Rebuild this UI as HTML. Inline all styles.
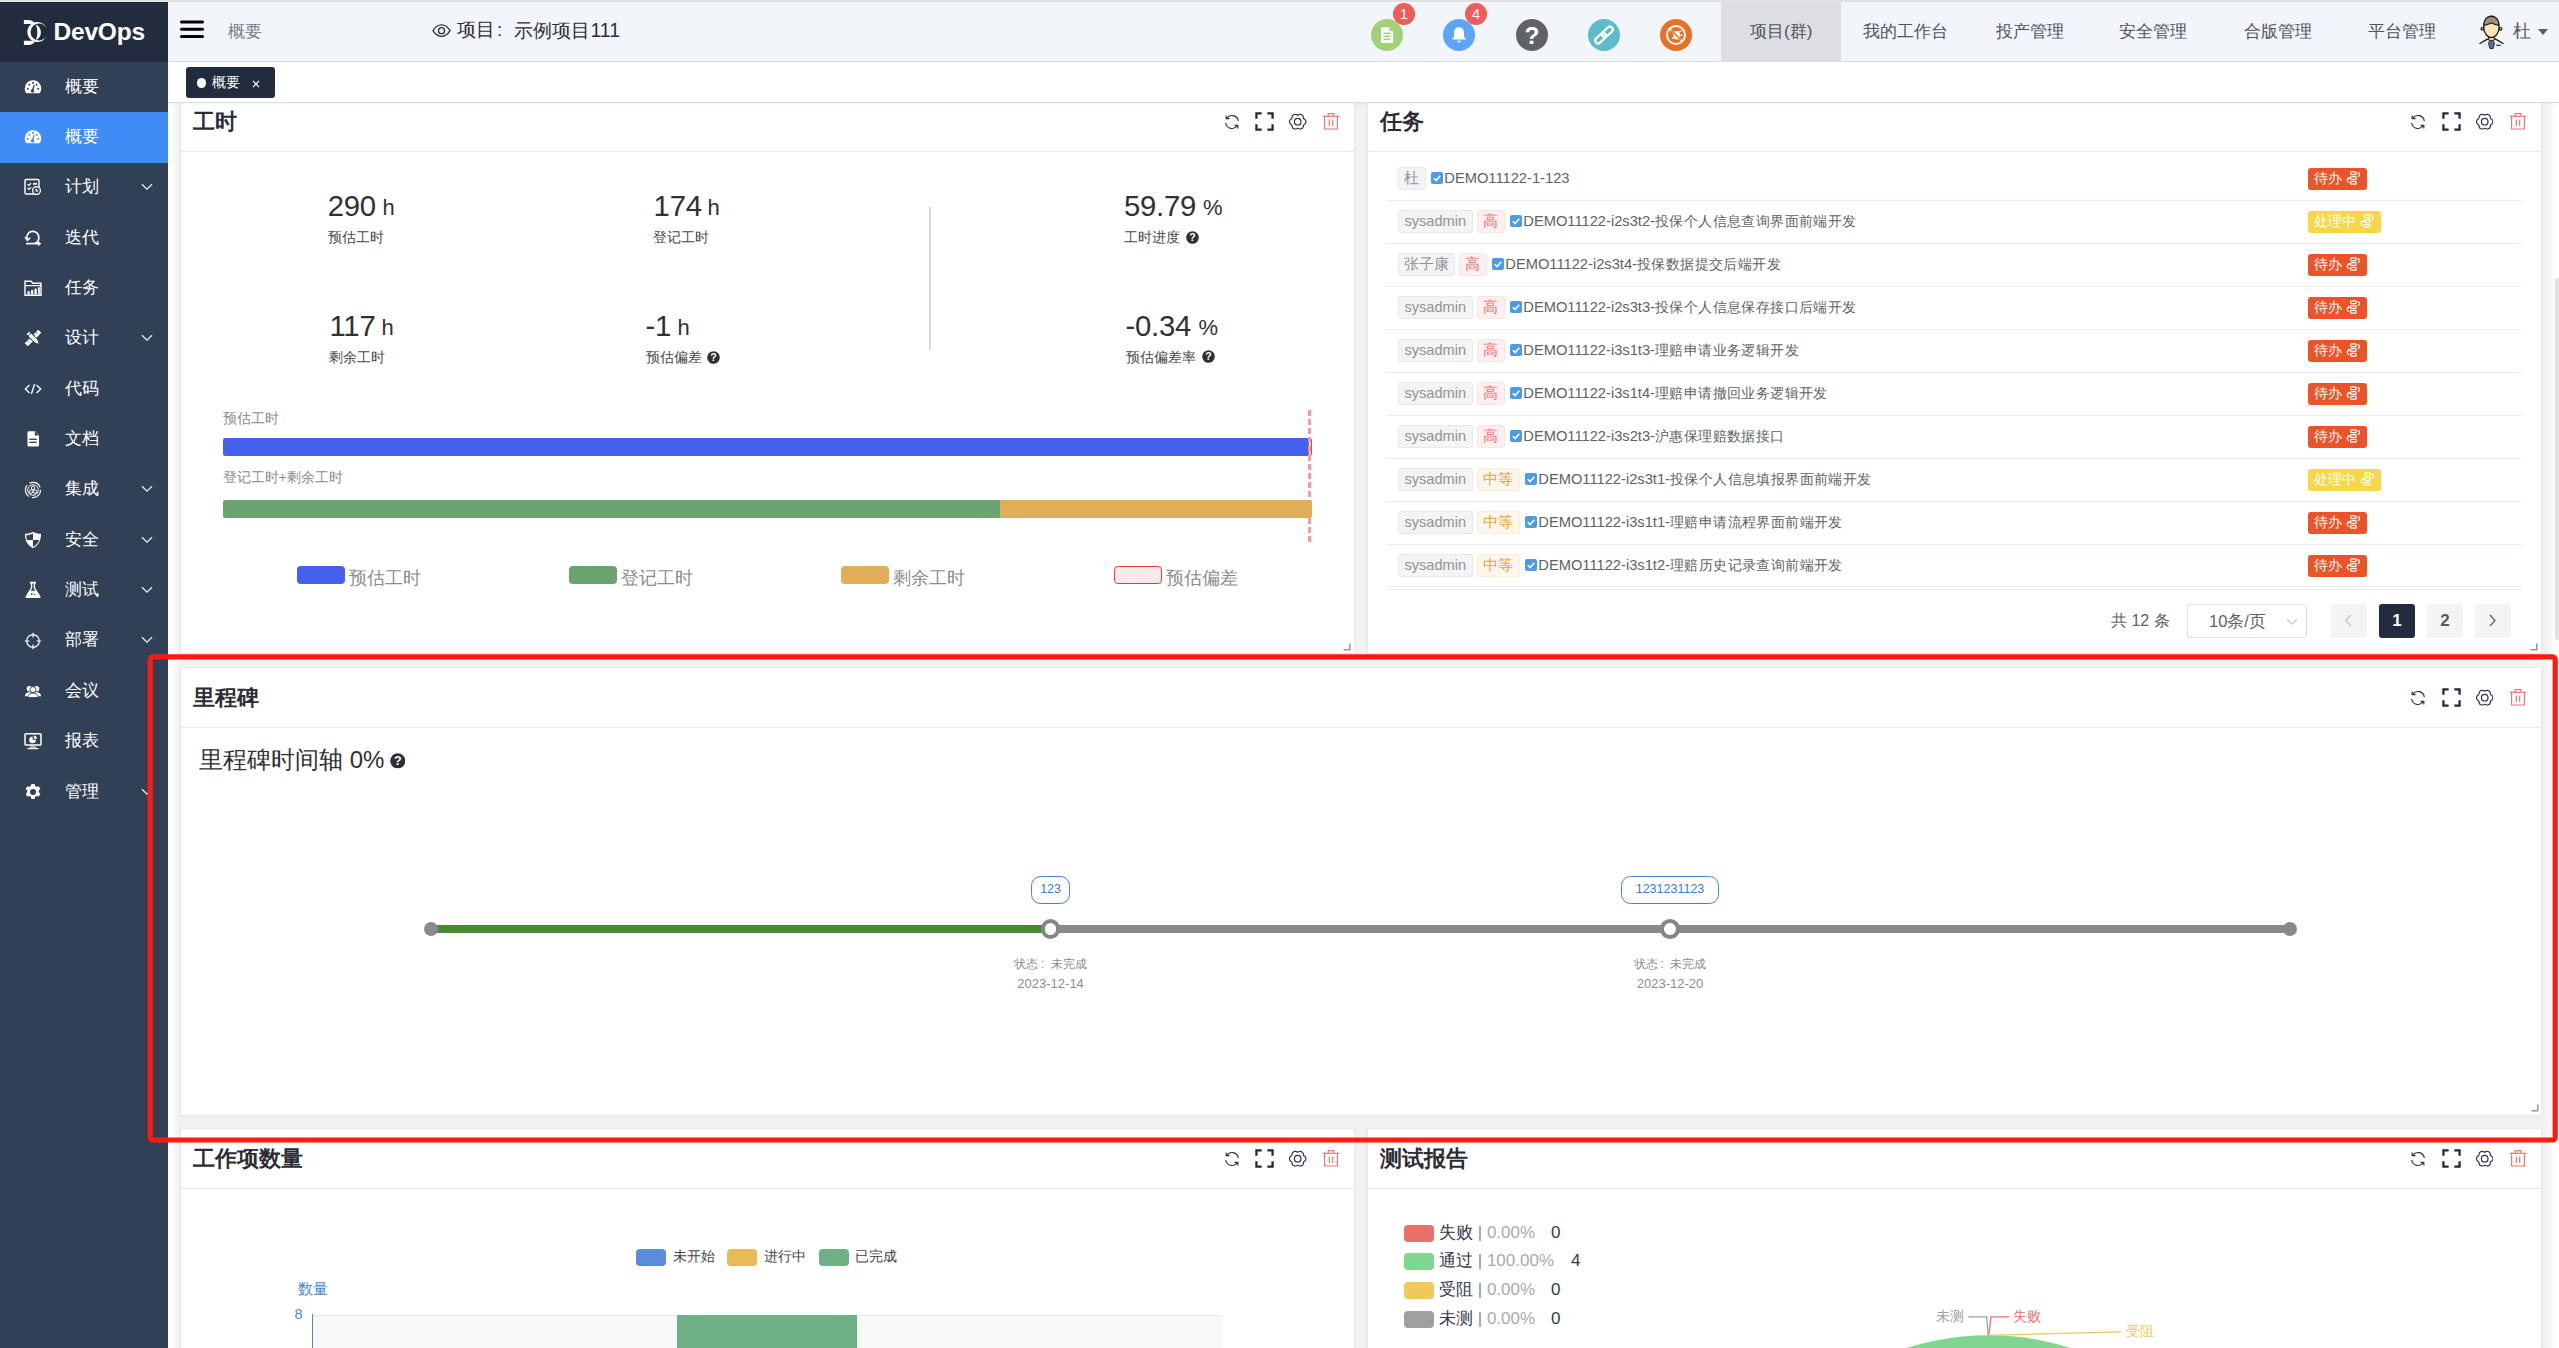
<!DOCTYPE html>
<html lang="zh"><head><meta charset="utf-8"><title>DevOps</title>
<style>
*{box-sizing:border-box;margin:0;padding:0}
html,body{width:2559px;height:1348px;overflow:hidden;background:#fff}
body{position:relative;font-family:"Liberation Sans",sans-serif;color:#303133}
.a{position:absolute;white-space:nowrap}
.c{position:absolute;background:#fff;border:1px solid #e8eaf1;box-shadow:0 2px 5px rgba(0,0,0,.035)}
.t{position:absolute;white-space:nowrap;line-height:1}
.ttl{font-size:21.500px;font-weight:bold;color:#2b2d33;margin-top:1px}
.hl{position:absolute;height:1px;background:#e6e9f2}
.tag{position:absolute;height:23px;line-height:21px;font-size:14.600px;border:1px solid #e9e9eb;background:#f4f4f5;color:#909399;border-radius:3px;text-align:center;white-space:nowrap}
.tg-h{background:#fef0f0;border-color:#fde2e2;color:#f56c6c}
.tg-m{background:#fdf6ec;border-color:#faecd8;color:#e6a23c}
.row{position:absolute;left:1386px;width:1136px;height:1px;background:#e9ecf4}
.rt{position:absolute;font-size:14.700px;line-height:16px;color:#606266;white-space:nowrap}
.z{font-size:14.400px;letter-spacing:.4px}
.cb{position:absolute;width:12px;height:12px;border-radius:2px;background:#4a9be8}
.st{position:absolute;height:22px;border-radius:3px;color:#fff;font-size:14px;line-height:20.500px;white-space:nowrap;padding-left:5.500px}
.mi{position:absolute;left:0;width:168px;height:50.4px}
.mi .tx{position:absolute;left:64.5px;top:0;line-height:50.4px;font-size:17px;color:#fff;white-space:nowrap}
.mi svg{position:absolute}
.nav{position:absolute;top:2px;height:59px;line-height:59px;font-size:17px;color:#50545c;white-space:nowrap}
.ic{position:absolute}
</style></head><body>

<div class="a" style="left:0;top:0;width:2559px;height:2px;background:#e2e3e0"></div>
<div class="a" style="left:168px;top:2px;width:2391px;height:60px;background:#f2f5fa;border-bottom:1px solid #d9dbe0"></div>
<div class="a" style="left:1721px;top:2px;width:120px;height:59px;background:#dddee3"></div>
<svg class="ic" style="left:179px;top:19px" width="26" height="20" viewBox="0 0 26 20"><g stroke="#000" stroke-width="3" stroke-linecap="round"><line x1="2.5" y1="3" x2="23.5" y2="3"/><line x1="2.5" y1="10.3" x2="23.5" y2="10.3"/><line x1="2.5" y1="17.6" x2="23.5" y2="17.6"/></g></svg>
<div class="t" style="left:228px;top:23px;font-size:17px;color:#7a7d85">概要</div>
<svg class="ic" style="left:432px;top:24px" width="19" height="13.300" viewBox="0 0 20 14"><path d="M1 7 C4 2.2 7 1 10 1 C13 1 16 2.2 19 7 C16 11.8 13 13 10 13 C7 13 4 11.8 1 7Z" fill="none" stroke="#333" stroke-width="1.4"/><circle cx="10" cy="7" r="3.2" fill="none" stroke="#333" stroke-width="1.4"/></svg>
<div class="t" style="left:457px;top:21px;font-size:18.600px;color:#2f3033">项目</div>
<div class="t" style="left:497px;top:21px;font-size:18.600px;color:#2f3033">:</div>
<div class="t" style="left:514.400px;top:21px;font-size:18.600px;color:#2f3033">示例项目<span style="font-size:19.500px">111</span></div>
<div class="a" style="left:1371.3px;top:19px;width:32px;height:32px;border-radius:50%;background:#a0d078"></div>
<svg class="ic" style="left:1371.3px;top:19px" width="32" height="32" viewBox="0 0 32 32"><path d="M10 9.5 a1.2 1.2 0 0 1 1.2-1.2 h7 l4 4 v10.5 a1.2 1.2 0 0 1-1.2 1.2 h-9.8 a1.2 1.2 0 0 1-1.2-1.2z" fill="#fff"/><path d="M18.4 8.3 v3.6 h3.6z" fill="#a0d078"/><g stroke="#a0d078" stroke-width="1.5"><line x1="12.5" y1="14.3" x2="19.5" y2="14.3"/><line x1="12.5" y1="17.3" x2="19.5" y2="17.3"/><line x1="12.5" y1="20.3" x2="19.5" y2="20.3"/></g></svg>
<div class="a" style="left:1443.4px;top:19px;width:32px;height:32px;border-radius:50%;background:#5ca5fb"></div>
<svg class="ic" style="left:1443.4px;top:19px" width="32" height="32" viewBox="0 0 32 32"><path d="M16 8.2 c-3.3 0-5 2.5-5 5.6 v3.6 l-2 3.2 h14 l-2-3.2 v-3.6 c0-3.1-1.7-5.6-5-5.6z" fill="#fff"/><path d="M14 21.8 h4 a2 1.6 0 0 1-4 0z" fill="#fff"/></svg>
<div class="a" style="left:1515.6px;top:19px;width:32px;height:32px;border-radius:50%;background:#606266"></div>
<svg class="ic" style="left:1515.6px;top:19px" width="32" height="32" viewBox="0 0 32 32"><text x="16" y="24.600" text-anchor="middle" font-family="Liberation Sans, sans-serif" font-weight="bold" font-size="24.500" fill="#fff">?</text></svg>
<div class="a" style="left:1587.7px;top:19px;width:32px;height:32px;border-radius:50%;background:#5cbccb"></div>
<svg class="ic" style="left:1587.7px;top:19px" width="32" height="32" viewBox="0 0 32 32"><g transform="rotate(-43 16 16)" fill="none" stroke="#fff" stroke-width="2.300"><rect x="5" y="13.100" width="12.600" height="5.800" rx="2.900"/><rect x="14.400" y="13.100" width="12.600" height="5.800" rx="2.900"/></g></svg>
<div class="a" style="left:1659.6px;top:19px;width:32px;height:32px;border-radius:50%;background:#e87128"></div>
<svg class="ic" style="left:1659.6px;top:19px" width="32" height="32" viewBox="0 0 32 32"><circle cx="16" cy="16" r="9" fill="none" stroke="#fff" stroke-width="2"/><line x1="9.8" y1="9.8" x2="22.2" y2="22.2" stroke="#fff" stroke-width="2"/><ellipse cx="16.6" cy="16.2" rx="3.4" ry="4.2" fill="#fff"/><g stroke="#fff" stroke-width="1.2"><line x1="19" y1="13" x2="21.5" y2="11.5"/><line x1="20" y1="16.2" x2="22.6" y2="16.2"/><line x1="19" y1="19" x2="21.2" y2="20.8"/><line x1="12" y1="19.5" x2="14" y2="18.6"/></g><line x1="11" y1="11" x2="21" y2="21" stroke="#e87128" stroke-width="1.6"/></svg>
<div class="a" style="left:1393px;top:2.5px;width:22px;height:22px;border-radius:11px;background:#f05b5b;color:#fff;font-size:15px;line-height:22px;text-align:center">1</div>
<div class="a" style="left:1464.8px;top:2.5px;width:22px;height:22px;border-radius:11px;background:#f05b5b;color:#fff;font-size:15px;line-height:22px;text-align:center">4</div>
<div class="nav" style="left:1750px">项目(群)</div>
<div class="nav" style="left:1863px">我的工作台</div>
<div class="nav" style="left:1995.5px">投产管理</div>
<div class="nav" style="left:2119px">安全管理</div>
<div class="nav" style="left:2243.5px">合版管理</div>
<div class="nav" style="left:2367.5px">平台管理</div>
<svg class="ic" style="left:2474px;top:14px" width="36" height="38" viewBox="2474 14 36 38">
<circle cx="2491.5" cy="32.6" r="16.8" fill="#f5f5f5"/>
<path d="M2479.5 43.700 Q2485 40.200 2488.600 38.600 H2494.400 Q2498 40.200 2503.600 43.700 Q2500 48.800 2491.500 49.200 Q2483 48.800 2479.500 43.700Z" fill="#e9eeed"/>
<path d="M2479.500 43.700 Q2485 40.200 2488.600 38.600 M2494.400 38.600 Q2498 40.200 2503.600 43.700" fill="none" stroke="#1a1a1a" stroke-width="1.300"/>
<path d="M2488.700 36 V40.600 H2494.300 V36Z" fill="#fce3b8"/>
<path d="M2488.700 36.500 V40.200 M2494.300 36.500 V40.200" stroke="#1a1a1a" stroke-width="1.100"/>
<path d="M2489.700 40.400 H2493.300 L2494.400 43.600 L2493 48.600 H2490 L2488.600 43.600Z" fill="#56708c" stroke="#1a1a1a" stroke-width=".9"/>
<circle cx="2482.300" cy="28.800" r="1.300" fill="#fce3b8" stroke="#1a1a1a" stroke-width="1.200"/>
<circle cx="2500.600" cy="28.800" r="1.300" fill="#fce3b8" stroke="#1a1a1a" stroke-width="1.200"/>
<ellipse cx="2491.400" cy="26.900" rx="7.700" ry="10.700" fill="#fce3b8" stroke="#1a1a1a" stroke-width="1.300"/>
<path d="M2483.900 25.300 C2483.600 19.500 2487 16.300 2491.400 16.300 C2495.800 16.300 2499.200 19.500 2498.900 25.300 Q2495.300 25 2491.400 23 Q2487.500 25 2483.900 25.300Z" fill="#9e8f82" stroke="#1a1a1a" stroke-width="1.200" stroke-linejoin="round"/>
<line x1="2496.300" y1="45.300" x2="2500.800" y2="45.300" stroke="#1a1a1a" stroke-width="1.100"/>
</svg>
<div class="t" style="left:2512.500px;top:22.500px;font-size:17.500px;color:#5a5d66">杜</div>
<div class="a" style="left:2537.700px;top:28.700px;width:0;height:0;border-left:5.300px solid transparent;border-right:5.300px solid transparent;border-top:6.200px solid #5a5d66"></div>
<div class="a" style="left:0;top:0;width:2559px;height:0;z-index:5">
<div class="a" style="left:168px;top:62px;width:2391px;height:41px;background:#fff;border-bottom:1px solid #d8dce5;box-shadow:0 1px 2px rgba(0,0,0,.05)"></div>
<div class="a" style="left:186px;top:67px;width:89px;height:31px;background:#232c3f;border-radius:3px"></div>
<div class="a" style="left:196.500px;top:78.200px;width:9.500px;height:9.500px;border-radius:50%;background:#fff"></div>
<div class="t" style="left:212px;top:75px;font-size:14px;color:#fff">概要</div>
<svg class="ic" style="left:251.500px;top:80px" width="8" height="8" viewBox="0 0 8 8"><path d="M1 1 L7 7 M7 1 L1 7" stroke="#fff" stroke-width="1.100"/></svg>
</div>
<div class="a" style="left:0;top:2px;width:168px;height:1346px;background:#324056"></div>
<div class="a" style="left:0;top:2px;width:168px;height:59.5px;background:#232c3e"></div>
<div class="a" style="left:0;top:112px;width:168px;height:50.5px;background:#3f8cf7"></div>
<svg class="ic" style="left:18px;top:12px" width="40" height="40" viewBox="18 12 40 40"><g fill="#fff">
<path d="M23.9 20 H28.5 C31 20 33 21.2 34.6 22.7 L33 23.9 H23.9Z"/>
<path d="M23.9 44.9 H28.5 C31 44.9 33 43.7 34.6 42.2 L33 40.8 H23.9Z"/>
<path d="M35.8 24.4 A8.7 8.7 0 0 1 35.8 40.2 A20.3 20.3 0 0 0 35.8 24.4Z"/>
<path d="M46.2 27.4 A10 10 0 1 0 46.2 36.6 A8.5 8.5 0 1 1 46.2 27.4Z"/>
</g></svg>
<div class="t" style="left:53.5px;top:20.200px;font-size:24.5px;font-weight:bold;color:#fff;letter-spacing:-.2px">DevOps</div>
<div class="mi" style="top:61.50px"><svg style="left:23.5px;top:16.2px" width="18" height="18" viewBox="0 0 18 18"><path d="M9 2.200 a8.200 8.200 0 0 0-8.200 8.200 c0 1.700.5 3.200 1.300 4.400 a1 1 0 0 0 .8.400 h12.200 a1 1 0 0 0 .8-.4 a8.200 8.200 0 0 0-6.900-12.600z" fill="#fff"/><g fill="#324056"><circle cx="3.800" cy="10.800" r="1"/><circle cx="5.300" cy="6.800" r="1"/><circle cx="9" cy="5" r="1"/><circle cx="12.700" cy="6.800" r="1"/><circle cx="14.200" cy="10.800" r="1"/><path d="M9.700 6.800 l1 .3 l-1.100 4.500 a1.700 1.700 0 1 1-1.500-.4z"/></g></svg><div class="tx">概要</div>
</div>
<div class="mi" style="top:111.86px"><svg style="left:23.5px;top:16.2px" width="18" height="18" viewBox="0 0 18 18"><path d="M9 2.200 a8.200 8.200 0 0 0-8.200 8.200 c0 1.700.5 3.200 1.300 4.400 a1 1 0 0 0 .8.400 h12.200 a1 1 0 0 0 .8-.4 a8.200 8.200 0 0 0-6.900-12.600z" fill="#fff"/><g fill="#3f8cf7"><circle cx="3.800" cy="10.800" r="1"/><circle cx="5.300" cy="6.800" r="1"/><circle cx="9" cy="5" r="1"/><circle cx="12.700" cy="6.800" r="1"/><circle cx="14.200" cy="10.800" r="1"/><path d="M9.700 6.800 l1 .3 l-1.100 4.500 a1.700 1.700 0 1 1-1.500-.4z"/></g></svg><div class="tx">概要</div>
</div>
<div class="mi" style="top:162.22px"><svg style="left:23.5px;top:16.2px" width="18" height="18" viewBox="0 0 18 18"><rect x="1" y="1.500" width="14" height="14.500" rx="1.200" fill="none" stroke="#fff" stroke-width="1.400"/><path d="M3.600 6.200 l1.300 1.300 l2.200-2.400 M3.600 10.200 l1.300 1.300 l2.200-2.400" fill="none" stroke="#fff" stroke-width="1.200"/><line x1="9" y1="5.800" x2="13" y2="5.800" stroke="#fff" stroke-width="1.800"/><circle cx="12.500" cy="12.500" r="3.900" fill="#324056" stroke="#fff" stroke-width="1.300"/><path d="M12.200 10.600 v2.200 h2" fill="none" stroke="#fff" stroke-width="1.200"/></svg><div class="tx">计划</div>
<svg style="left:140.700px;top:21px" width="12" height="8" viewBox="0 0 12 8"><path d="M1 1.200 L6 6.200 L11 1.200" fill="none" stroke="#e8ecf2" stroke-width="1.300"/></svg>
</div>
<div class="mi" style="top:212.58px"><svg style="left:23.5px;top:16.2px" width="18" height="18" viewBox="0 0 18 18"><path d="M3.200 10.500 a6 6 0 1 1 11.600-1.800 c0 2.800-1.600 4.800-4 5.800" fill="none" stroke="#fff" stroke-width="1.700"/><path d="M1 8.200 l2.400 3.200 l2.800-2.600" fill="none" stroke="#fff" stroke-width="1.500"/><line x1="2" y1="14.600" x2="14" y2="14.600" stroke="#fff" stroke-width="1.700"/><path d="M14 12 l3.200 2.600 l-3.200 2.600z" fill="#fff"/></svg><div class="tx">迭代</div>
</div>
<div class="mi" style="top:262.94px"><svg style="left:23.5px;top:16.2px" width="18" height="18" viewBox="0 0 18 18"><path d="M1 16.200 v-14 h6.200 l1.600 2 h8.200 v12z" fill="none" stroke="#fff" stroke-width="1.400"/><line x1="1" y1="6.600" x2="17" y2="6.600" stroke="#fff" stroke-width="1.200"/><g fill="#fff"><rect x="3.500" y="12.300" width="2.300" height="3.200"/><rect x="7" y="11" width="2.300" height="4.500"/><rect x="10.500" y="9.600" width="2.300" height="5.900"/><rect x="14" y="8.300" width="1.800" height="7.200"/></g></svg><div class="tx">任务</div>
</div>
<div class="mi" style="top:313.30px"><svg style="left:23.5px;top:16.2px" width="18" height="18" viewBox="0 0 18 18"><g transform="rotate(45 9 9)"><rect x="6.800" y="-.5" width="4.400" height="19" fill="#fff"/><g stroke="#324056" stroke-width=".9"><line x1="6.800" y1="3" x2="9" y2="3"/><line x1="6.800" y1="6" x2="9" y2="6"/><line x1="6.800" y1="12" x2="9" y2="12"/><line x1="6.800" y1="15" x2="9" y2="15"/></g></g><g transform="rotate(-45 9 9)"><path d="M6.900 1.500 h4.200 v12.500 l-2.100 4 l-2.100-4z" fill="#fff" stroke="#324056" stroke-width=".9"/><line x1="6.900" y1="4" x2="11.100" y2="4" stroke="#324056" stroke-width=".9"/></g></svg><div class="tx">设计</div>
<svg style="left:140.700px;top:21px" width="12" height="8" viewBox="0 0 12 8"><path d="M1 1.200 L6 6.200 L11 1.200" fill="none" stroke="#e8ecf2" stroke-width="1.300"/></svg>
</div>
<div class="mi" style="top:363.66px"><svg style="left:23.5px;top:16.2px" width="18" height="18" viewBox="0 0 18 18"><path d="M5.500 5 l-4.200 4 l4.200 4 M12.500 5 l4.200 4 l-4.200 4 M10.600 4 l-3.200 10" fill="none" stroke="#fff" stroke-width="1.300"/></svg><div class="tx">代码</div>
</div>
<div class="mi" style="top:414.02px"><svg style="left:23.5px;top:16.2px" width="18" height="18" viewBox="0 0 18 18"><path d="M3.500 2.500 a1.300 1.300 0 0 1 1.300-1.300 h6.200 l4 4 v10 a1.300 1.300 0 0 1-1.300 1.300 h-8.900 a1.300 1.300 0 0 1-1.300-1.300z" fill="#fff"/><path d="M10.800 1.200 v4.200 h4.200z" fill="#324056"/><g stroke="#324056" stroke-width="1.300"><line x1="5.200" y1="9.300" x2="12.800" y2="9.300"/><line x1="5.200" y1="12.300" x2="12.800" y2="12.300"/></g></svg><div class="tx">文档</div>
</div>
<div class="mi" style="top:464.38px"><svg style="left:23.5px;top:16.2px" width="18" height="18" viewBox="0 0 18 18"><circle cx="9" cy="9" r="7.600" fill="none" stroke="#fff" stroke-width="1.200" stroke-dasharray="13 2.900"/><circle cx="9" cy="9" r="5.300" fill="none" stroke="#fff" stroke-width="1"/><circle cx="9" cy="6.900" r="1.700" fill="none" stroke="#fff" stroke-width="1"/><circle cx="7" cy="10.600" r="1.700" fill="none" stroke="#fff" stroke-width="1"/><circle cx="11" cy="10.600" r="1.700" fill="none" stroke="#fff" stroke-width="1"/></svg><div class="tx">集成</div>
<svg style="left:140.700px;top:21px" width="12" height="8" viewBox="0 0 12 8"><path d="M1 1.200 L6 6.200 L11 1.200" fill="none" stroke="#e8ecf2" stroke-width="1.300"/></svg>
</div>
<div class="mi" style="top:514.74px"><svg style="left:23.5px;top:16.2px" width="18" height="18" viewBox="0 0 18 18"><path d="M9 .8 c2.600 1.400 5.200 2 8 2 c0 7-2.600 11.600-8 14.400 c-5.400-2.800-8-7.400-8-14.400 c2.800 0 5.400-.6 8-2z" fill="#fff"/><path d="M9 2.600 v6.400 h-6.200 c-.3-1.500-.4-3-.4-4.700 c2.400-.1 4.500-.700 6.600-1.700z M9 9 h6.200 c-.9 2.900-2.900 5-6.200 6.900z" fill="#324056"/></svg><div class="tx">安全</div>
<svg style="left:140.700px;top:21px" width="12" height="8" viewBox="0 0 12 8"><path d="M1 1.200 L6 6.200 L11 1.200" fill="none" stroke="#e8ecf2" stroke-width="1.300"/></svg>
</div>
<div class="mi" style="top:565.10px"><svg style="left:23.5px;top:16.2px" width="18" height="18" viewBox="0 0 18 18"><path d="M6 .8 h6 v1.600 h-.9 v4.300 l5.400 8.800 a1 1 0 0 1-.9 1.500 h-13.200 a1 1 0 0 1-.9-1.500 l5.400-8.800 v-4.300 h-.9z" fill="#fff"/><path d="M8.300 2.400 h1.400 v4.700 l1.600 2.700 h-4.600 l1.600-2.700z" fill="#324056"/><circle cx="7.800" cy="13" r=".9" fill="#324056"/><circle cx="10.800" cy="13.600" r=".7" fill="#324056"/></svg><div class="tx">测试</div>
<svg style="left:140.700px;top:21px" width="12" height="8" viewBox="0 0 12 8"><path d="M1 1.200 L6 6.200 L11 1.200" fill="none" stroke="#e8ecf2" stroke-width="1.300"/></svg>
</div>
<div class="mi" style="top:615.46px"><svg style="left:23.5px;top:16.2px" width="18" height="18" viewBox="0 0 18 18"><circle cx="9" cy="9" r="6.300" fill="none" stroke="#fff" stroke-width="1.200"/><path d="M9 .8 v4.600 M9 12.600 v4.600 M.8 9 h4.600 M12.600 9 h4.600" fill="none" stroke="#fff" stroke-width="1.200"/></svg><div class="tx">部署</div>
<svg style="left:140.700px;top:21px" width="12" height="8" viewBox="0 0 12 8"><path d="M1 1.200 L6 6.200 L11 1.200" fill="none" stroke="#e8ecf2" stroke-width="1.300"/></svg>
</div>
<div class="mi" style="top:665.82px"><svg style="left:23.5px;top:16.2px" width="18" height="18" viewBox="0 0 18 18"><g fill="#fff"><circle cx="5.400" cy="6.800" r="2.700"/><circle cx="12.600" cy="6.800" r="2.700"/><path d="M.8 14.200 c.4-2.600 2.200-4 4.600-4 c1.400 0 2.500.5 3.300 1.400 c-1.300 1-1.900 2-2.100 2.600z"/><path d="M17.200 14.200 c-.4-2.600-2.200-4-4.600-4 c-1.400 0-2.500.5-3.300 1.400 c1.300 1 1.900 2 2.100 2.600z"/></g><circle cx="9" cy="7.600" r="3" fill="#fff" stroke="#324056" stroke-width=".9"/><path d="M3.600 15.600 c.5-3 2.600-4.600 5.400-4.600 s4.900 1.600 5.400 4.600z" fill="#fff" stroke="#324056" stroke-width=".9"/></svg><div class="tx">会议</div>
</div>
<div class="mi" style="top:716.18px"><svg style="left:23.5px;top:16.2px" width="18" height="18" viewBox="0 0 18 18"><rect x="1" y="1.800" width="16" height="11.200" rx=".8" fill="none" stroke="#fff" stroke-width="1.500"/><path d="M6.500 14 h5 l1.200 2 h-7.400z" fill="#aab"/><line x1="3.500" y1="16.600" x2="14.500" y2="16.600" stroke="#fff" stroke-width="1.200"/><path d="M8.600 4.400 v3.400 h3.400 a3.400 3.400 0 1 1-3.400-3.400z" fill="#fff"/><path d="M9.800 3.600 a3.200 3.200 0 0 1 3.100 3.100 h-3.100z" fill="#fff"/></svg><div class="tx">报表</div>
</div>
<div class="mi" style="top:766.54px"><svg style="left:23.5px;top:16.2px" width="18" height="18" viewBox="0 0 18 18"><path d="M7.400.9h3.200l.5 2.200c.5.200 1 .5 1.500.8l2.100-.7 1.600 2.800-1.600 1.500c.1.600.1 1.200 0 1.800l1.600 1.500-1.600 2.800-2.100-.7c-.5.300-1 .6-1.500.8l-.5 2.200H7.400l-.5-2.200c-.5-.2-1-.5-1.500-.8l-2.100.7-1.600-2.800 1.600-1.500c-.1-.6-.1-1.200 0-1.800L1.700 6l1.600-2.800 2.100.7c.5-.3 1-.6 1.500-.8z" fill="#fff"/><circle cx="9" cy="9" r="3" fill="#324056"/></svg><div class="tx">管理</div>
<svg style="left:140.700px;top:21px" width="12" height="8" viewBox="0 0 12 8"><path d="M1 1.200 L6 6.200 L11 1.200" fill="none" stroke="#e8ecf2" stroke-width="1.300"/></svg>
</div>
<div class="a" style="left:168px;top:103px;width:2391px;height:1245px;background:#f2f2f2"></div>
<div class="a" style="left:168px;top:103px;width:12px;height:1245px;background:linear-gradient(90deg,#fff 0%,#fcfcfc 35%,#f1f1f2 100%)"></div>
<div class="a" style="left:2542px;top:103px;width:17px;height:1245px;background:linear-gradient(90deg,#eff0f3 0%,#f6f6f8 45%,#fff 80%)"></div>
<div class="c" style="left:180px;top:100px;width:1175px;height:554px"></div>
<div class="t ttl" style="left:193px;top:110.500px">工时</div>
<div class="hl" style="left:181px;top:151px;width:1173px"></div>
<svg class="ic" style="left:1222.7px;top:112.8px" width="18" height="18" viewBox="0 0 18 18"><g fill="none" stroke="#2b3347" stroke-width="1.200"><path d="M15.300 8 a6.400 6.400 0 0 0-11.600-2.700"/><path d="M2.700 10 a6.400 6.400 0 0 0 11.600 2.700"/><path d="M3.200 2.400 v3.300 h3.300"/><path d="M14.800 15.600 v-3.300 h-3.300"/></g></svg>
<svg class="ic" style="left:1255.0px;top:111.89999999999999px" width="19" height="19" viewBox="0 0 20 20"><path d="M1.500 7 v-5.500 h5.500 M13 1.500 h5.500 v5.500 M18.500 13 v5.500 h-5.500 M7 18.500 h-5.500 v-5.500" fill="none" stroke="#1e2a40" stroke-width="2.400"/></svg>
<svg class="ic" style="left:1289.3px;top:113.3px" width="17.400" height="17.400" viewBox="0 0 18 18"><path d="M17.42 7.85 L17.42 10.15 L16.18 11.57 L15.02 12.37 L14.88 13.74 L14.24 15.50 L12.18 16.65 L10.29 16.31 L9.00 15.74 L7.71 16.31 L5.82 16.65 L3.76 15.50 L3.12 13.74 L2.98 12.37 L1.82 11.57 L0.58 10.15 L0.58 7.85 L1.82 6.43 L2.98 5.63 L3.12 4.26 L3.76 2.50 L5.82 1.35 L7.71 1.69 L9.00 2.26 L10.29 1.69 L12.18 1.35 L14.24 2.50 L14.88 4.26 L15.02 5.63 L16.18 6.43Z" fill="none" stroke="#2b3347" stroke-width="1.200" stroke-linejoin="round"/><circle cx="9" cy="9" r="3.400" fill="none" stroke="#2b3347" stroke-width="1.250"/></svg>
<svg class="ic" style="left:1322px;top:112.0px" width="18" height="18" viewBox="0 0 18 18"><g fill="none" stroke="#ec7474" stroke-width="1.200"><path d="M.6 4.300 h16.800"/><path d="M6.200 4.300 v-2.700 h5.600 v2.700"/><path d="M2.600 4.300 v12.700 h12.800 v-12.700"/><path d="M7.300 7.500 v6.400 M10.700 7.500 v6.400"/></g></svg>
<div class="t" style="left:327.7px;top:190.80px;font-size:29.300px;color:#303133;letter-spacing:-.25px">290</div>
<div class="t" style="left:382.4px;top:196.98px;font-size:22px;color:#303133">h</div>
<div class="t" style="left:327.5px;top:230.3px;font-size:14px;color:#45474d">预估工时</div>
<div class="t" style="left:653.6px;top:190.80px;font-size:29.300px;color:#303133;letter-spacing:-.25px">174</div>
<div class="t" style="left:707.5px;top:196.98px;font-size:22px;color:#303133">h</div>
<div class="t" style="left:652.5px;top:230.3px;font-size:14px;color:#45474d">登记工时</div>
<div class="t" style="left:329.5px;top:310.80px;font-size:29.300px;color:#303133;letter-spacing:-.25px">117</div>
<div class="t" style="left:381.6px;top:316.98px;font-size:22px;color:#303133">h</div>
<div class="t" style="left:328.5px;top:350.3px;font-size:14px;color:#45474d">剩余工时</div>
<div class="t" style="left:645.5px;top:310.80px;font-size:29.300px;color:#303133;letter-spacing:-.25px">-1</div>
<div class="t" style="left:677.5px;top:316.98px;font-size:22px;color:#303133">h</div>
<div class="t" style="left:645.5px;top:350.3px;font-size:14px;color:#45474d">预估偏差</div>
<svg class="ic" style="left:707.2px;top:350.5px" width="13.0" height="13.0" viewBox="0 0 13 13"><circle cx="6.5" cy="6.5" r="6.300" fill="#2f3033"/><text x="6.5" y="10.300" text-anchor="middle" font-family="Liberation Sans, sans-serif" font-weight="bold" font-size="10.500" fill="#fff">?</text></svg>
<div class="a" style="left:929px;top:206.500px;width:1.600px;height:143px;background:#d4d7e2"></div>
<div class="t" style="left:1124px;top:190.80px;font-size:29.300px;color:#303133;letter-spacing:-.25px">59.79</div>
<div class="t" style="left:1203px;top:196.98px;font-size:22px;color:#303133">%</div>
<div class="t" style="left:1124px;top:230.3px;font-size:14px;color:#45474d">工时进度</div>
<svg class="ic" style="left:1185.5px;top:230.5px" width="13.0" height="13.0" viewBox="0 0 13 13"><circle cx="6.5" cy="6.5" r="6.300" fill="#2f3033"/><text x="6.5" y="10.300" text-anchor="middle" font-family="Liberation Sans, sans-serif" font-weight="bold" font-size="10.500" fill="#fff">?</text></svg>
<div class="t" style="left:1125.5px;top:310.80px;font-size:29.300px;color:#303133;letter-spacing:-.25px">-0.34</div>
<div class="t" style="left:1198.5px;top:316.98px;font-size:22px;color:#303133">%</div>
<div class="t" style="left:1125.5px;top:350.3px;font-size:14px;color:#45474d">预估偏差率</div>
<svg class="ic" style="left:1201.8px;top:350.3px" width="13.0" height="13.0" viewBox="0 0 13 13"><circle cx="6.5" cy="6.5" r="6.300" fill="#2f3033"/><text x="6.5" y="10.300" text-anchor="middle" font-family="Liberation Sans, sans-serif" font-weight="bold" font-size="10.500" fill="#fff">?</text></svg>
<div class="t" style="left:222.500px;top:411px;font-size:14px;color:#8a8a8a">预估工时</div>
<div class="a" style="left:223px;top:438px;width:1085px;height:18px;background:#4461ee;border-radius:2px 0 0 2px"></div>
<div class="a" style="left:1307.500px;top:438px;width:4px;height:18px;border:1px solid #e83c30;border-radius:2px;background:#f7eaea"></div>
<svg class="ic" style="left:1306px;top:409px" width="8" height="134" viewBox="0 0 8 134"><line x1="3.600" y1="1" x2="3.600" y2="133" stroke="#f59a9a" stroke-width="3" stroke-dasharray="6 3"/></svg>
<div class="t" style="left:222.500px;top:469.500px;font-size:14px;color:#8a8a8a">登记工时+剩余工时</div>
<div class="a" style="left:223px;top:500px;width:777px;height:18px;background:#6aa471;border-radius:2px 0 0 2px"></div>
<div class="a" style="left:1000px;top:500px;width:311.500px;height:18px;background:#e0ad58;border-radius:0 2px 2px 0"></div>
<div class="a" style="left:297px;top:566px;width:48px;height:18px;border-radius:4px;background:#4461ee;"></div>
<div class="t" style="left:348.5px;top:568.500px;font-size:18px;color:#8c8c8c">预估工时</div>
<div class="a" style="left:569px;top:566px;width:48px;height:18px;border-radius:4px;background:#6aa471;"></div>
<div class="t" style="left:620.5px;top:568.500px;font-size:18px;color:#8c8c8c">登记工时</div>
<div class="a" style="left:841px;top:566px;width:48px;height:18px;border-radius:4px;background:#e0ad58;"></div>
<div class="t" style="left:892.5px;top:568.500px;font-size:18px;color:#8c8c8c">剩余工时</div>
<div class="a" style="left:1114px;top:566px;width:48px;height:18px;border-radius:4px;background:#f7eaea;border:1px solid #e83c30;"></div>
<div class="t" style="left:1165.5px;top:568.500px;font-size:18px;color:#8c8c8c">预估偏差</div>
<svg class="ic" style="left:1343.2px;top:643.2px" width="8" height="8" viewBox="0 0 8 8"><path d="M6.800 .5 v6.300 h-6.300" fill="none" stroke="#9a9a9a" stroke-width="1.600"/></svg>
<div class="c" style="left:1367px;top:100px;width:1175px;height:554px"></div>
<div class="t ttl" style="left:1380px;top:110.500px">任务</div>
<div class="hl" style="left:1368px;top:151px;width:1173px"></div>
<svg class="ic" style="left:2409.3999999999996px;top:112.8px" width="18" height="18" viewBox="0 0 18 18"><g fill="none" stroke="#2b3347" stroke-width="1.200"><path d="M15.300 8 a6.400 6.400 0 0 0-11.600-2.700"/><path d="M2.700 10 a6.400 6.400 0 0 0 11.600 2.700"/><path d="M3.200 2.400 v3.300 h3.300"/><path d="M14.800 15.600 v-3.300 h-3.300"/></g></svg>
<svg class="ic" style="left:2441.9px;top:111.89999999999999px" width="19" height="19" viewBox="0 0 20 20"><path d="M1.500 7 v-5.500 h5.500 M13 1.500 h5.500 v5.500 M18.500 13 v5.500 h-5.500 M7 18.500 h-5.500 v-5.500" fill="none" stroke="#1e2a40" stroke-width="2.400"/></svg>
<svg class="ic" style="left:2475.9px;top:113.3px" width="17.400" height="17.400" viewBox="0 0 18 18"><path d="M17.42 7.85 L17.42 10.15 L16.18 11.57 L15.02 12.37 L14.88 13.74 L14.24 15.50 L12.18 16.65 L10.29 16.31 L9.00 15.74 L7.71 16.31 L5.82 16.65 L3.76 15.50 L3.12 13.74 L2.98 12.37 L1.82 11.57 L0.58 10.15 L0.58 7.85 L1.82 6.43 L2.98 5.63 L3.12 4.26 L3.76 2.50 L5.82 1.35 L7.71 1.69 L9.00 2.26 L10.29 1.69 L12.18 1.35 L14.24 2.50 L14.88 4.26 L15.02 5.63 L16.18 6.43Z" fill="none" stroke="#2b3347" stroke-width="1.200" stroke-linejoin="round"/><circle cx="9" cy="9" r="3.400" fill="none" stroke="#2b3347" stroke-width="1.250"/></svg>
<svg class="ic" style="left:2509px;top:112.0px" width="18" height="18" viewBox="0 0 18 18"><g fill="none" stroke="#ec7474" stroke-width="1.200"><path d="M.6 4.300 h16.800"/><path d="M6.200 4.300 v-2.700 h5.600 v2.700"/><path d="M2.600 4.300 v12.700 h12.800 v-12.700"/><path d="M7.300 7.500 v6.400 M10.700 7.500 v6.400"/></g></svg>
<div class="tag" style="left:1398px;top:166.5px;width:27.5px">杜</div>
<svg class="ic" style="left:1430.8px;top:172px" width="12" height="12" viewBox="0 0 12 12"><rect width="12" height="12" rx="2" fill="#4a9be8"/><path d="M2.800 6.200 l2.300 2.300 l4.200-4.800" fill="none" stroke="#fff" stroke-width="1.600"/></svg>
<div class="rt" style="left:1444.3px;top:170px">DEMO11122-1-123<span class="z"></span></div>
<div class="st" style="left:2308px;top:168px;width:59px;background:#eb5428">待办</div>
<svg class="ic" style="left:2346px;top:171.2px" width="14" height="14" viewBox="0 0 14 14"><g fill="none" stroke="#fff" stroke-width="1.200"><rect x="4.600" y=".8" width="5.600" height="2.800" rx=".9"/><rect x="4.600" y="5.600" width="5.600" height="2.800" rx=".9"/><rect x="4.600" y="10.400" width="5.600" height="2.800" rx=".9"/><path d="M11.600 1.600 c2.600.5 2.600 3.200 .3 4"/><path d="M3.200 7 c-2.800.600-2.800 3.800 0 4.600"/><path d="M2 6.200 l1.300 .8 l-.9 1.300"/></g></svg>
<div class="row" style="top:200px"></div>
<div class="tag" style="left:1398px;top:209.5px;width:74.5px">sysadmin</div>
<div class="tag tg-h" style="left:1477.0px;top:209.5px;width:27.5px">高</div>
<svg class="ic" style="left:1509.8px;top:215px" width="12" height="12" viewBox="0 0 12 12"><rect width="12" height="12" rx="2" fill="#4a9be8"/><path d="M2.800 6.200 l2.300 2.300 l4.200-4.800" fill="none" stroke="#fff" stroke-width="1.600"/></svg>
<div class="rt" style="left:1523.3px;top:213px">DEMO11122-i2s3t2-<span class="z">投保个人信息查询界面前端开发</span></div>
<div class="st" style="left:2308px;top:211px;width:73px;background:#f7d747">处理中</div>
<svg class="ic" style="left:2360px;top:214.2px" width="14" height="14" viewBox="0 0 14 14"><g fill="none" stroke="#fff" stroke-width="1.200"><rect x="4.600" y=".8" width="5.600" height="2.800" rx=".9"/><rect x="4.600" y="5.600" width="5.600" height="2.800" rx=".9"/><rect x="4.600" y="10.400" width="5.600" height="2.800" rx=".9"/><path d="M11.600 1.600 c2.600.5 2.600 3.200 .3 4"/><path d="M3.200 7 c-2.800.600-2.800 3.800 0 4.600"/><path d="M2 6.200 l1.300 .8 l-.9 1.300"/></g></svg>
<div class="row" style="top:243px"></div>
<div class="tag" style="left:1398px;top:252.5px;width:56.5px">张子康</div>
<div class="tag tg-h" style="left:1459.0px;top:252.5px;width:27.5px">高</div>
<svg class="ic" style="left:1491.8px;top:258px" width="12" height="12" viewBox="0 0 12 12"><rect width="12" height="12" rx="2" fill="#4a9be8"/><path d="M2.800 6.200 l2.300 2.300 l4.200-4.800" fill="none" stroke="#fff" stroke-width="1.600"/></svg>
<div class="rt" style="left:1505.3px;top:256px">DEMO11122-i2s3t4-<span class="z">投保数据提交后端开发</span></div>
<div class="st" style="left:2308px;top:254px;width:59px;background:#eb5428">待办</div>
<svg class="ic" style="left:2346px;top:257.2px" width="14" height="14" viewBox="0 0 14 14"><g fill="none" stroke="#fff" stroke-width="1.200"><rect x="4.600" y=".8" width="5.600" height="2.800" rx=".9"/><rect x="4.600" y="5.600" width="5.600" height="2.800" rx=".9"/><rect x="4.600" y="10.400" width="5.600" height="2.800" rx=".9"/><path d="M11.600 1.600 c2.600.5 2.600 3.200 .3 4"/><path d="M3.200 7 c-2.800.600-2.800 3.800 0 4.600"/><path d="M2 6.200 l1.300 .8 l-.9 1.300"/></g></svg>
<div class="row" style="top:286px"></div>
<div class="tag" style="left:1398px;top:295.5px;width:74.5px">sysadmin</div>
<div class="tag tg-h" style="left:1477.0px;top:295.5px;width:27.5px">高</div>
<svg class="ic" style="left:1509.8px;top:301px" width="12" height="12" viewBox="0 0 12 12"><rect width="12" height="12" rx="2" fill="#4a9be8"/><path d="M2.800 6.200 l2.300 2.300 l4.200-4.800" fill="none" stroke="#fff" stroke-width="1.600"/></svg>
<div class="rt" style="left:1523.3px;top:299px">DEMO11122-i2s3t3-<span class="z">投保个人信息保存接口后端开发</span></div>
<div class="st" style="left:2308px;top:297px;width:59px;background:#eb5428">待办</div>
<svg class="ic" style="left:2346px;top:300.2px" width="14" height="14" viewBox="0 0 14 14"><g fill="none" stroke="#fff" stroke-width="1.200"><rect x="4.600" y=".8" width="5.600" height="2.800" rx=".9"/><rect x="4.600" y="5.600" width="5.600" height="2.800" rx=".9"/><rect x="4.600" y="10.400" width="5.600" height="2.800" rx=".9"/><path d="M11.600 1.600 c2.600.5 2.600 3.200 .3 4"/><path d="M3.200 7 c-2.800.600-2.800 3.800 0 4.600"/><path d="M2 6.200 l1.300 .8 l-.9 1.300"/></g></svg>
<div class="row" style="top:329px"></div>
<div class="tag" style="left:1398px;top:338.5px;width:74.5px">sysadmin</div>
<div class="tag tg-h" style="left:1477.0px;top:338.5px;width:27.5px">高</div>
<svg class="ic" style="left:1509.8px;top:344px" width="12" height="12" viewBox="0 0 12 12"><rect width="12" height="12" rx="2" fill="#4a9be8"/><path d="M2.800 6.200 l2.300 2.300 l4.200-4.800" fill="none" stroke="#fff" stroke-width="1.600"/></svg>
<div class="rt" style="left:1523.3px;top:342px">DEMO11122-i3s1t3-<span class="z">理赔申请业务逻辑开发</span></div>
<div class="st" style="left:2308px;top:340px;width:59px;background:#eb5428">待办</div>
<svg class="ic" style="left:2346px;top:343.2px" width="14" height="14" viewBox="0 0 14 14"><g fill="none" stroke="#fff" stroke-width="1.200"><rect x="4.600" y=".8" width="5.600" height="2.800" rx=".9"/><rect x="4.600" y="5.600" width="5.600" height="2.800" rx=".9"/><rect x="4.600" y="10.400" width="5.600" height="2.800" rx=".9"/><path d="M11.600 1.600 c2.600.5 2.600 3.200 .3 4"/><path d="M3.200 7 c-2.800.600-2.800 3.800 0 4.600"/><path d="M2 6.200 l1.300 .8 l-.9 1.300"/></g></svg>
<div class="row" style="top:372px"></div>
<div class="tag" style="left:1398px;top:381.5px;width:74.5px">sysadmin</div>
<div class="tag tg-h" style="left:1477.0px;top:381.5px;width:27.5px">高</div>
<svg class="ic" style="left:1509.8px;top:387px" width="12" height="12" viewBox="0 0 12 12"><rect width="12" height="12" rx="2" fill="#4a9be8"/><path d="M2.800 6.200 l2.300 2.300 l4.200-4.800" fill="none" stroke="#fff" stroke-width="1.600"/></svg>
<div class="rt" style="left:1523.3px;top:385px">DEMO11122-i3s1t4-<span class="z">理赔申请撤回业务逻辑开发</span></div>
<div class="st" style="left:2308px;top:383px;width:59px;background:#eb5428">待办</div>
<svg class="ic" style="left:2346px;top:386.2px" width="14" height="14" viewBox="0 0 14 14"><g fill="none" stroke="#fff" stroke-width="1.200"><rect x="4.600" y=".8" width="5.600" height="2.800" rx=".9"/><rect x="4.600" y="5.600" width="5.600" height="2.800" rx=".9"/><rect x="4.600" y="10.400" width="5.600" height="2.800" rx=".9"/><path d="M11.600 1.600 c2.600.5 2.600 3.200 .3 4"/><path d="M3.200 7 c-2.800.600-2.800 3.800 0 4.600"/><path d="M2 6.200 l1.300 .8 l-.9 1.300"/></g></svg>
<div class="row" style="top:415px"></div>
<div class="tag" style="left:1398px;top:424.5px;width:74.5px">sysadmin</div>
<div class="tag tg-h" style="left:1477.0px;top:424.5px;width:27.5px">高</div>
<svg class="ic" style="left:1509.8px;top:430px" width="12" height="12" viewBox="0 0 12 12"><rect width="12" height="12" rx="2" fill="#4a9be8"/><path d="M2.800 6.200 l2.300 2.300 l4.200-4.800" fill="none" stroke="#fff" stroke-width="1.600"/></svg>
<div class="rt" style="left:1523.3px;top:428px">DEMO11122-i3s2t3-<span class="z">沪惠保理赔数据接口</span></div>
<div class="st" style="left:2308px;top:426px;width:59px;background:#eb5428">待办</div>
<svg class="ic" style="left:2346px;top:429.2px" width="14" height="14" viewBox="0 0 14 14"><g fill="none" stroke="#fff" stroke-width="1.200"><rect x="4.600" y=".8" width="5.600" height="2.800" rx=".9"/><rect x="4.600" y="5.600" width="5.600" height="2.800" rx=".9"/><rect x="4.600" y="10.400" width="5.600" height="2.800" rx=".9"/><path d="M11.600 1.600 c2.600.5 2.600 3.200 .3 4"/><path d="M3.200 7 c-2.800.600-2.800 3.800 0 4.600"/><path d="M2 6.200 l1.300 .8 l-.9 1.300"/></g></svg>
<div class="row" style="top:458px"></div>
<div class="tag" style="left:1398px;top:467.5px;width:74.5px">sysadmin</div>
<div class="tag tg-m" style="left:1477.0px;top:467.5px;width:42.5px">中等</div>
<svg class="ic" style="left:1524.8px;top:473px" width="12" height="12" viewBox="0 0 12 12"><rect width="12" height="12" rx="2" fill="#4a9be8"/><path d="M2.800 6.200 l2.300 2.300 l4.200-4.800" fill="none" stroke="#fff" stroke-width="1.600"/></svg>
<div class="rt" style="left:1538.3px;top:471px">DEMO11122-i2s3t1-<span class="z">投保个人信息填报界面前端开发</span></div>
<div class="st" style="left:2308px;top:469px;width:73px;background:#f7d747">处理中</div>
<svg class="ic" style="left:2360px;top:472.2px" width="14" height="14" viewBox="0 0 14 14"><g fill="none" stroke="#fff" stroke-width="1.200"><rect x="4.600" y=".8" width="5.600" height="2.800" rx=".9"/><rect x="4.600" y="5.600" width="5.600" height="2.800" rx=".9"/><rect x="4.600" y="10.400" width="5.600" height="2.800" rx=".9"/><path d="M11.600 1.600 c2.600.5 2.600 3.200 .3 4"/><path d="M3.200 7 c-2.800.600-2.800 3.800 0 4.600"/><path d="M2 6.200 l1.300 .8 l-.9 1.300"/></g></svg>
<div class="row" style="top:501px"></div>
<div class="tag" style="left:1398px;top:510.5px;width:74.5px">sysadmin</div>
<div class="tag tg-m" style="left:1477.0px;top:510.5px;width:42.5px">中等</div>
<svg class="ic" style="left:1524.8px;top:516px" width="12" height="12" viewBox="0 0 12 12"><rect width="12" height="12" rx="2" fill="#4a9be8"/><path d="M2.800 6.200 l2.300 2.300 l4.200-4.800" fill="none" stroke="#fff" stroke-width="1.600"/></svg>
<div class="rt" style="left:1538.3px;top:514px">DEMO11122-i3s1t1-<span class="z">理赔申请流程界面前端开发</span></div>
<div class="st" style="left:2308px;top:512px;width:59px;background:#eb5428">待办</div>
<svg class="ic" style="left:2346px;top:515.2px" width="14" height="14" viewBox="0 0 14 14"><g fill="none" stroke="#fff" stroke-width="1.200"><rect x="4.600" y=".8" width="5.600" height="2.800" rx=".9"/><rect x="4.600" y="5.600" width="5.600" height="2.800" rx=".9"/><rect x="4.600" y="10.400" width="5.600" height="2.800" rx=".9"/><path d="M11.600 1.600 c2.600.5 2.600 3.200 .3 4"/><path d="M3.200 7 c-2.800.600-2.800 3.800 0 4.600"/><path d="M2 6.200 l1.300 .8 l-.9 1.300"/></g></svg>
<div class="row" style="top:544px"></div>
<div class="tag" style="left:1398px;top:553.5px;width:74.5px">sysadmin</div>
<div class="tag tg-m" style="left:1477.0px;top:553.5px;width:42.5px">中等</div>
<svg class="ic" style="left:1524.8px;top:559px" width="12" height="12" viewBox="0 0 12 12"><rect width="12" height="12" rx="2" fill="#4a9be8"/><path d="M2.800 6.200 l2.300 2.300 l4.200-4.800" fill="none" stroke="#fff" stroke-width="1.600"/></svg>
<div class="rt" style="left:1538.3px;top:557px">DEMO11122-i3s1t2-<span class="z">理赔历史记录查询前端开发</span></div>
<div class="st" style="left:2308px;top:555px;width:59px;background:#eb5428">待办</div>
<svg class="ic" style="left:2346px;top:558.2px" width="14" height="14" viewBox="0 0 14 14"><g fill="none" stroke="#fff" stroke-width="1.200"><rect x="4.600" y=".8" width="5.600" height="2.800" rx=".9"/><rect x="4.600" y="5.600" width="5.600" height="2.800" rx=".9"/><rect x="4.600" y="10.400" width="5.600" height="2.800" rx=".9"/><path d="M11.600 1.600 c2.600.5 2.600 3.200 .3 4"/><path d="M3.200 7 c-2.800.600-2.800 3.800 0 4.600"/><path d="M2 6.200 l1.300 .8 l-.9 1.300"/></g></svg>
<div class="row" style="top:586px"></div><div class="row" style="top:589px"></div>
<div class="t" style="left:2111px;top:612.500px;font-size:16px;color:#606266">共 12 条</div>
<div class="a" style="left:2187px;top:604px;width:120px;height:34px;border:1px solid #dcdfe6;border-radius:3px;background:#fff"></div>
<div class="t" style="left:2209px;top:612.500px;font-size:16.500px;color:#606266">10条/页</div>
<svg class="ic" style="left:2286px;top:617.500px" width="12" height="8" viewBox="0 0 12 8"><path d="M1 1.200 L6 6.200 L11 1.200" fill="none" stroke="#c0c4cc" stroke-width="1.200"/></svg>
<div class="a" style="left:2331px;top:604px;width:36px;height:34px;border-radius:3px;background:#f4f4f5"></div>
<svg class="ic" style="left:2344.2px;top:613.700px" width="9" height="13" viewBox="0 0 9 13"><path d="M7 1 L2 6.500 L7 12" fill="none" stroke="#c0c4cc" stroke-width="1.300"/></svg>
<div class="a" style="left:2379px;top:604px;width:36px;height:34px;border-radius:3px;background:#232c3f"></div>
<div class="a" style="left:2379px;top:604px;width:36px;height:34px;line-height:34px;text-align:center;font-size:17px;font-weight:bold;color:#fff">1</div>
<div class="a" style="left:2427px;top:604px;width:36px;height:34px;border-radius:3px;background:#f4f4f5"></div>
<div class="a" style="left:2427px;top:604px;width:36px;height:34px;line-height:34px;text-align:center;font-size:17px;font-weight:bold;color:#555960">2</div>
<div class="a" style="left:2475px;top:604px;width:36px;height:34px;border-radius:3px;background:#f4f4f5"></div>
<svg class="ic" style="left:2488.2px;top:613.700px" width="9" height="13" viewBox="0 0 9 13"><path d="M2 1 L7 6.500 L2 12" fill="none" stroke="#5a5e66" stroke-width="1.300"/></svg>
<svg class="ic" style="left:2530.2px;top:643.2px" width="8" height="8" viewBox="0 0 8 8"><path d="M6.800 .5 v6.300 h-6.300" fill="none" stroke="#9a9a9a" stroke-width="1.600"/></svg>
<div class="c" style="left:180px;top:667px;width:2362px;height:449px"></div>
<div class="t ttl" style="left:193px;top:686.500px">里程碑</div>
<div class="hl" style="left:181px;top:727px;width:2360px"></div>
<svg class="ic" style="left:2409.3999999999996px;top:688.8000000000001px" width="18" height="18" viewBox="0 0 18 18"><g fill="none" stroke="#2b3347" stroke-width="1.200"><path d="M15.300 8 a6.400 6.400 0 0 0-11.600-2.700"/><path d="M2.700 10 a6.400 6.400 0 0 0 11.600 2.700"/><path d="M3.200 2.400 v3.300 h3.300"/><path d="M14.800 15.600 v-3.300 h-3.300"/></g></svg>
<svg class="ic" style="left:2441.9px;top:687.9px" width="19" height="19" viewBox="0 0 20 20"><path d="M1.500 7 v-5.500 h5.500 M13 1.500 h5.500 v5.500 M18.500 13 v5.500 h-5.500 M7 18.500 h-5.500 v-5.500" fill="none" stroke="#1e2a40" stroke-width="2.400"/></svg>
<svg class="ic" style="left:2475.9px;top:689.3px" width="17.400" height="17.400" viewBox="0 0 18 18"><path d="M17.42 7.85 L17.42 10.15 L16.18 11.57 L15.02 12.37 L14.88 13.74 L14.24 15.50 L12.18 16.65 L10.29 16.31 L9.00 15.74 L7.71 16.31 L5.82 16.65 L3.76 15.50 L3.12 13.74 L2.98 12.37 L1.82 11.57 L0.58 10.15 L0.58 7.85 L1.82 6.43 L2.98 5.63 L3.12 4.26 L3.76 2.50 L5.82 1.35 L7.71 1.69 L9.00 2.26 L10.29 1.69 L12.18 1.35 L14.24 2.50 L14.88 4.26 L15.02 5.63 L16.18 6.43Z" fill="none" stroke="#2b3347" stroke-width="1.200" stroke-linejoin="round"/><circle cx="9" cy="9" r="3.400" fill="none" stroke="#2b3347" stroke-width="1.250"/></svg>
<svg class="ic" style="left:2509px;top:688.0px" width="18" height="18" viewBox="0 0 18 18"><g fill="none" stroke="#ec7474" stroke-width="1.200"><path d="M.6 4.300 h16.800"/><path d="M6.200 4.300 v-2.700 h5.600 v2.700"/><path d="M2.600 4.300 v12.700 h12.800 v-12.700"/><path d="M7.300 7.500 v6.400 M10.700 7.500 v6.400"/></g></svg>
<div class="t" style="left:199px;top:747.500px;font-size:24px;color:#303133">里程碑时间轴 0%</div>
<svg class="ic" style="left:389.7px;top:753.4px" width="15.6" height="15.6" viewBox="0 0 13 13"><circle cx="6.5" cy="6.5" r="6.300" fill="#2f3033"/><text x="6.5" y="10.300" text-anchor="middle" font-family="Liberation Sans, sans-serif" font-weight="bold" font-size="10.500" fill="#fff">?</text></svg>
<div class="a" style="left:431px;top:925px;width:620px;height:8px;background:#478a2f"></div>
<div class="a" style="left:1051px;top:925px;width:1239px;height:8px;background:#8a8a8a"></div>
<div class="a" style="left:424px;top:922px;width:14px;height:14px;border-radius:50%;background:#8a8a8a"></div>
<div class="a" style="left:2283px;top:922px;width:14px;height:14px;border-radius:50%;background:#8a8a8a"></div>
<div class="a" style="left:1040.8px;top:919.200px;width:19.600px;height:19.600px;border-radius:50%;background:#fff;border:4.600px solid #868686"></div>
<div class="a" style="left:1031.35px;top:876.200px;width:38.5px;height:27.500px;border:1px solid #4b80d8;border-radius:9.500px;color:#3f7ad8;font-size:12.500px;line-height:24px;text-align:center">123</div>
<div class="a" style="left:990.5999999999999px;top:957px;width:120px;text-align:center;font-size:12px;line-height:14px;color:#8c8c8c">状态<span style="margin:0 6.500px 0 2.500px">:</span>未完成</div>
<div class="a" style="left:990.5999999999999px;top:976.500px;width:120px;text-align:center;font-size:13px;line-height:14px;color:#8c8c8c">2023-12-14</div>
<div class="a" style="left:1660.2px;top:919.200px;width:19.600px;height:19.600px;border-radius:50%;background:#fff;border:4.600px solid #868686"></div>
<div class="a" style="left:1621.0px;top:876.200px;width:98px;height:27.500px;border:1px solid #4b80d8;border-radius:9.500px;color:#3f7ad8;font-size:12.500px;line-height:24px;text-align:center">1231231123</div>
<div class="a" style="left:1610px;top:957px;width:120px;text-align:center;font-size:12px;line-height:14px;color:#8c8c8c">状态<span style="margin:0 6.500px 0 2.500px">:</span>未完成</div>
<div class="a" style="left:1610px;top:976.500px;width:120px;text-align:center;font-size:13px;line-height:14px;color:#8c8c8c">2023-12-20</div>
<svg class="ic" style="left:2530.5px;top:1104px" width="8" height="8" viewBox="0 0 8 8"><path d="M6.800 .5 v6.300 h-6.300" fill="none" stroke="#9a9a9a" stroke-width="1.600"/></svg>
<div class="c" style="left:180px;top:1128px;width:1175px;height:232px"></div>
<div class="t ttl" style="left:193px;top:1147.500px">工作项数量</div>
<div class="hl" style="left:181px;top:1188px;width:1173px"></div>
<svg class="ic" style="left:1222.7px;top:1149.8px" width="18" height="18" viewBox="0 0 18 18"><g fill="none" stroke="#2b3347" stroke-width="1.200"><path d="M15.300 8 a6.400 6.400 0 0 0-11.600-2.700"/><path d="M2.700 10 a6.400 6.400 0 0 0 11.600 2.700"/><path d="M3.200 2.400 v3.300 h3.300"/><path d="M14.800 15.600 v-3.300 h-3.300"/></g></svg>
<svg class="ic" style="left:1255.0px;top:1148.8999999999999px" width="19" height="19" viewBox="0 0 20 20"><path d="M1.500 7 v-5.500 h5.500 M13 1.500 h5.500 v5.500 M18.500 13 v5.500 h-5.500 M7 18.500 h-5.500 v-5.500" fill="none" stroke="#1e2a40" stroke-width="2.400"/></svg>
<svg class="ic" style="left:1289.3px;top:1150.3px" width="17.400" height="17.400" viewBox="0 0 18 18"><path d="M17.42 7.85 L17.42 10.15 L16.18 11.57 L15.02 12.37 L14.88 13.74 L14.24 15.50 L12.18 16.65 L10.29 16.31 L9.00 15.74 L7.71 16.31 L5.82 16.65 L3.76 15.50 L3.12 13.74 L2.98 12.37 L1.82 11.57 L0.58 10.15 L0.58 7.85 L1.82 6.43 L2.98 5.63 L3.12 4.26 L3.76 2.50 L5.82 1.35 L7.71 1.69 L9.00 2.26 L10.29 1.69 L12.18 1.35 L14.24 2.50 L14.88 4.26 L15.02 5.63 L16.18 6.43Z" fill="none" stroke="#2b3347" stroke-width="1.200" stroke-linejoin="round"/><circle cx="9" cy="9" r="3.400" fill="none" stroke="#2b3347" stroke-width="1.250"/></svg>
<svg class="ic" style="left:1322px;top:1149.0px" width="18" height="18" viewBox="0 0 18 18"><g fill="none" stroke="#ec7474" stroke-width="1.200"><path d="M.6 4.300 h16.800"/><path d="M6.200 4.300 v-2.700 h5.600 v2.700"/><path d="M2.600 4.300 v12.700 h12.800 v-12.700"/><path d="M7.300 7.500 v6.400 M10.700 7.500 v6.400"/></g></svg>
<div class="a" style="left:636px;top:1248.700px;width:30px;height:17px;border-radius:4px;background:#5b8bd9"></div>
<div class="t" style="left:672.5px;top:1248.800px;font-size:14px;color:#444">未开始</div>
<div class="a" style="left:727.3px;top:1248.700px;width:30px;height:17px;border-radius:4px;background:#e8bb54"></div>
<div class="t" style="left:763.8px;top:1248.800px;font-size:14px;color:#444">进行中</div>
<div class="a" style="left:818.6px;top:1248.700px;width:30px;height:17px;border-radius:4px;background:#70b085"></div>
<div class="t" style="left:855.1px;top:1248.800px;font-size:14px;color:#444">已完成</div>
<div class="t" style="left:298px;top:1281.500px;font-size:14.500px;color:#4a8ac8">数量</div>
<div class="t" style="left:294.500px;top:1306.500px;font-size:14.500px;color:#4a8ac8">8</div>
<div class="a" style="left:313px;top:1314.500px;width:909px;height:40px;background:#f8f8f8;border-top:1px solid #e8e8e8"></div>
<div class="a" style="left:311.700px;top:1314px;width:1.300px;height:40px;background:#4a8ac8"></div>
<div class="a" style="left:677px;top:1315px;width:180px;height:40px;background:#70b085"></div>
<div class="c" style="left:1367px;top:1128px;width:1175px;height:232px"></div>
<div class="t ttl" style="left:1380px;top:1147.500px">测试报告</div>
<div class="hl" style="left:1368px;top:1188px;width:1173px"></div>
<svg class="ic" style="left:2409.3999999999996px;top:1149.8px" width="18" height="18" viewBox="0 0 18 18"><g fill="none" stroke="#2b3347" stroke-width="1.200"><path d="M15.300 8 a6.400 6.400 0 0 0-11.600-2.700"/><path d="M2.700 10 a6.400 6.400 0 0 0 11.600 2.700"/><path d="M3.200 2.400 v3.300 h3.300"/><path d="M14.800 15.600 v-3.300 h-3.300"/></g></svg>
<svg class="ic" style="left:2441.9px;top:1148.8999999999999px" width="19" height="19" viewBox="0 0 20 20"><path d="M1.500 7 v-5.500 h5.500 M13 1.500 h5.500 v5.500 M18.500 13 v5.500 h-5.500 M7 18.500 h-5.500 v-5.500" fill="none" stroke="#1e2a40" stroke-width="2.400"/></svg>
<svg class="ic" style="left:2475.9px;top:1150.3px" width="17.400" height="17.400" viewBox="0 0 18 18"><path d="M17.42 7.85 L17.42 10.15 L16.18 11.57 L15.02 12.37 L14.88 13.74 L14.24 15.50 L12.18 16.65 L10.29 16.31 L9.00 15.74 L7.71 16.31 L5.82 16.65 L3.76 15.50 L3.12 13.74 L2.98 12.37 L1.82 11.57 L0.58 10.15 L0.58 7.85 L1.82 6.43 L2.98 5.63 L3.12 4.26 L3.76 2.50 L5.82 1.35 L7.71 1.69 L9.00 2.26 L10.29 1.69 L12.18 1.35 L14.24 2.50 L14.88 4.26 L15.02 5.63 L16.18 6.43Z" fill="none" stroke="#2b3347" stroke-width="1.200" stroke-linejoin="round"/><circle cx="9" cy="9" r="3.400" fill="none" stroke="#2b3347" stroke-width="1.250"/></svg>
<svg class="ic" style="left:2509px;top:1149.0px" width="18" height="18" viewBox="0 0 18 18"><g fill="none" stroke="#ec7474" stroke-width="1.200"><path d="M.6 4.300 h16.800"/><path d="M6.200 4.300 v-2.700 h5.600 v2.700"/><path d="M2.600 4.300 v12.700 h12.800 v-12.700"/><path d="M7.300 7.500 v6.400 M10.700 7.500 v6.400"/></g></svg>
<div class="a" style="left:1403.700px;top:1224.7px;width:30px;height:17px;border-radius:4px;background:#e8726a"></div>
<div class="t" style="left:1439px;top:1223.5px;font-size:17px;color:#333a4a">失败 <span style="color:#8a8a8a">|</span> <span style="color:#aaa">0.00%</span></div>
<div class="t" style="left:1551px;top:1223.5px;font-size:17px;color:#333a4a">0</div>
<div class="a" style="left:1403.700px;top:1253.4px;width:30px;height:17px;border-radius:4px;background:#80d68f"></div>
<div class="t" style="left:1439px;top:1252.2px;font-size:17px;color:#333a4a">通过 <span style="color:#8a8a8a">|</span> <span style="color:#aaa">100.00%</span></div>
<div class="t" style="left:1571px;top:1252.2px;font-size:17px;color:#333a4a">4</div>
<div class="a" style="left:1403.700px;top:1282.1px;width:30px;height:17px;border-radius:4px;background:#f0c85c"></div>
<div class="t" style="left:1439px;top:1280.9px;font-size:17px;color:#333a4a">受阻 <span style="color:#8a8a8a">|</span> <span style="color:#aaa">0.00%</span></div>
<div class="t" style="left:1551px;top:1280.9px;font-size:17px;color:#333a4a">0</div>
<div class="a" style="left:1403.700px;top:1310.8px;width:30px;height:17px;border-radius:4px;background:#a0a0a0"></div>
<div class="t" style="left:1439px;top:1309.6px;font-size:17px;color:#333a4a">未测 <span style="color:#8a8a8a">|</span> <span style="color:#aaa">0.00%</span></div>
<div class="t" style="left:1551px;top:1309.6px;font-size:17px;color:#333a4a">0</div>
<svg class="ic" style="left:1700px;top:1300px" width="600" height="48" viewBox="1700 1300 600 48"><circle cx="1988.500" cy="1606.300" r="271" fill="#80d68f"/><g fill="none" stroke-width="1.300"><path d="M1968.400 1316.900 H1986.600 L1988.300 1335.300" stroke="#a0a0a0"/><path d="M2009 1316.900 H1991 L1988.700 1335.300" stroke="#e8726a"/><path d="M1988.500 1335.300 L2121.400 1331.800" stroke="#f0c85c"/></g></svg>
<div class="t" style="left:1936px;top:1308.500px;font-size:14px;color:#a0a0a0">未测</div>
<div class="t" style="left:2013px;top:1308.500px;font-size:14px;color:#e8726a">失败</div>
<div class="t" style="left:2126px;top:1323.500px;font-size:14px;color:#f0c85c">受阻</div>
<div class="a" style="left:2554.500px;top:277.500px;width:6px;height:362px;border-radius:3px 0 0 3px;background:#e2e2e3"></div>
<svg class="ic" style="left:140px;top:648px" width="2419" height="500" viewBox="140 648 2419 500"><rect x="150.200" y="656.900" width="2405" height="483.100" rx="2.600" fill="none" stroke="#ff1a0f" stroke-width="5.200"/></svg>
</body></html>
